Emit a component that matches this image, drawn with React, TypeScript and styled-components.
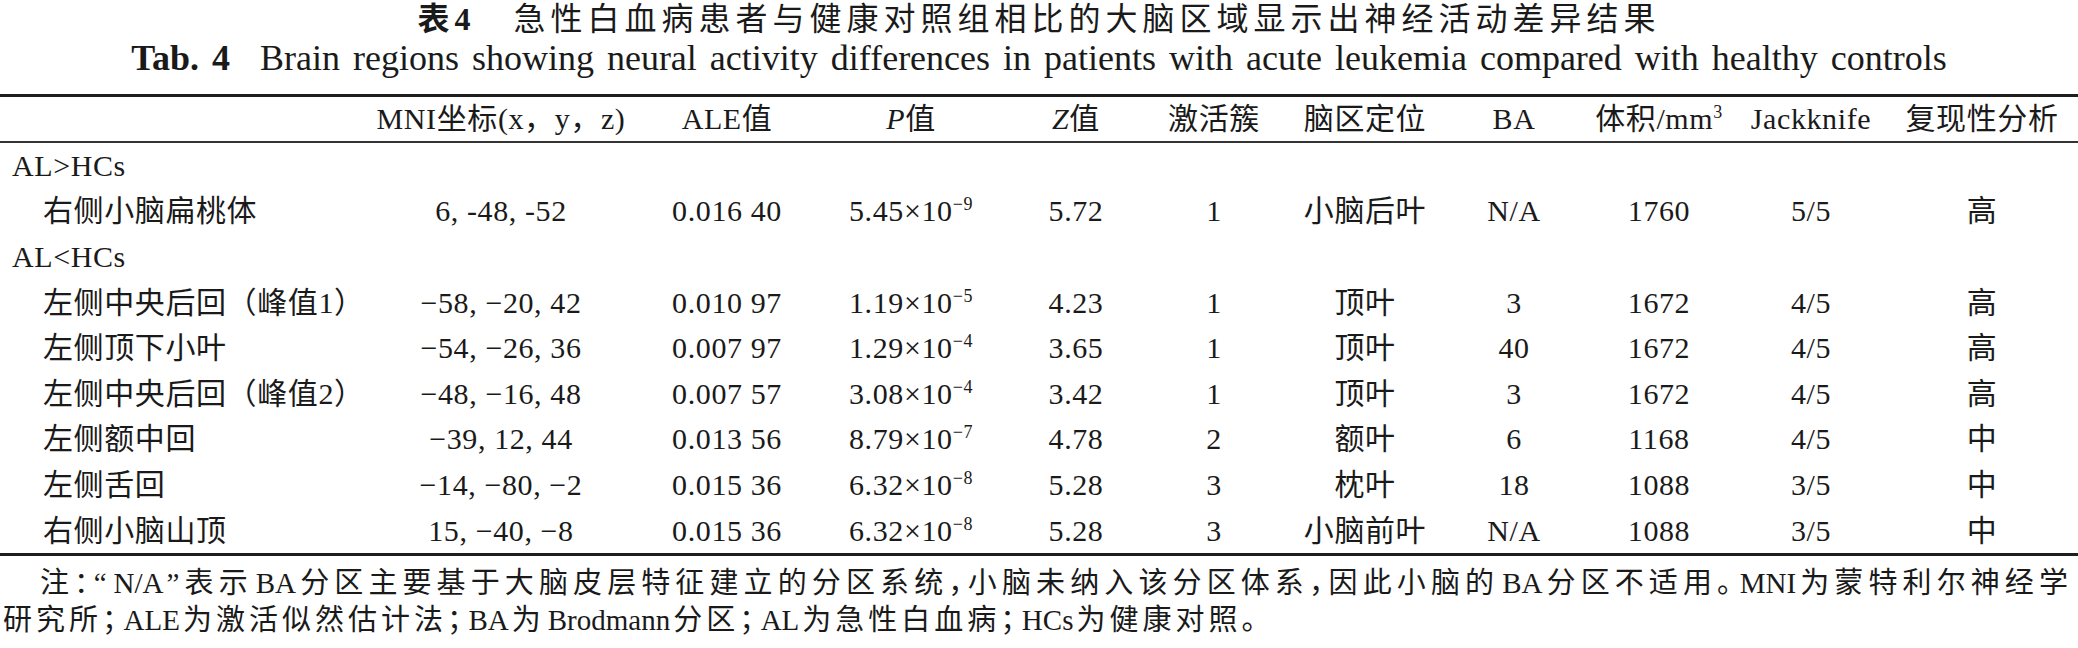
import React from "react";
import styled, { createGlobalStyle } from "styled-components";

const GlobalStyle = createGlobalStyle`
  html, body {
    margin: 0;
    padding: 0;
    background: #ffffff;
    overflow: hidden;
  }
  body {
    font-family: "Liberation Serif", "Noto Sans CJK SC", serif;
    color: #1a1a1a;
  }
`;

const Page = styled.main`
  width: 2078px;
  display: flex;
  flex-direction: column;
`;

const CaptionCn = styled.h1`
  margin: 0;
  height: 38px;
  line-height: 38px;
  text-align: center;
  font-size: 32px;
  font-weight: 400;
  letter-spacing: 5px;
  white-space: nowrap;
`;

const CaptionEn = styled.h2`
  margin: 0;
  height: 40px;
  line-height: 40px;
  text-align: center;
  font-size: 36px;
  font-weight: 400;
  word-spacing: 4px;
  white-space: nowrap;
`;

const CaptionLabel = styled.span<{ $gap: number }>`
  font-weight: 700;
  margin-right: ${(p) => p.$gap}px;
`;

const Table = styled.section`
  margin-top: 16px;
  border-top: 3px solid #1e1e1e;
  border-bottom: 3px solid #1e1e1e;
  font-size: 30px;
  letter-spacing: 0.6px;
`;

const COLUMNS = "372px 258px 194px 174px 156px 120px 182px 116px 174px 130px 202px";

const Row = styled.div<{ $head?: boolean }>`
  display: grid;
  grid-template-columns: ${COLUMNS};
  align-items: center;
  height: ${(p) => (p.$head ? "44px" : "45.6px")};
  border-bottom: ${(p) => (p.$head ? "2px solid #333" : "none")};
  white-space: nowrap;
  line-height: 36px;
`;

const Cell = styled.div`
  text-align: center;

  &:first-child {
    text-align: left;
    padding-left: 43px;
  }

  &:last-child {
    padding-left: 10px;
  }
`;

const GroupLabel = styled.div`
  grid-column: 1 / -1;
  padding-left: 12px;
`;

const Var = styled.i`
  font-style: italic;
`;

const Sup = styled.sup`
  font-size: 0.6em;
  line-height: 0;
  vertical-align: 0.6em;
`;

const Notes = styled.section`
  margin-top: 9px;
  padding: 0 6px 0 3px;
  font-size: 29px;
  line-height: 37px;
  letter-spacing: 4px;
  font-feature-settings: "halt";
`;

const NoteLine = styled.p<{ $fill?: boolean }>`
  margin: 0;
  white-space: nowrap;
  text-indent: ${(p) => (p.$fill ? "37px" : "0")};
  text-align: ${(p) => (p.$fill ? "justify" : "left")};
  text-align-last: ${(p) => (p.$fill ? "justify" : "left")};
`;

const Term = styled.span`
  letter-spacing: 0;
  margin: 0 3px;
`;

const sci = (m: string, e: string) => (
  <>
    {m}×10<Sup>{e}</Sup>
  </>
);

type Entry = {
  region: string;
  mni: string;
  ale: string;
  p: React.ReactNode;
  z: string;
  cluster: string;
  lobe: string;
  ba: string;
  volume: string;
  jack: string;
  repro: string;
};

type Group = { label: string; rows: Entry[] };

const groups: Group[] = [
  {
    label: "AL>HCs",
    rows: [
      { region: "右侧小脑扁桃体", mni: "6, -48, -52", ale: "0.016 40", p: sci("5.45", "−9"), z: "5.72", cluster: "1", lobe: "小脑后叶", ba: "N/A", volume: "1760", jack: "5/5", repro: "高" },
    ],
  },
  {
    label: "AL<HCs",
    rows: [
      { region: "左侧中央后回（峰值1）", mni: "−58, −20, 42", ale: "0.010 97", p: sci("1.19", "−5"), z: "4.23", cluster: "1", lobe: "顶叶", ba: "3", volume: "1672", jack: "4/5", repro: "高" },
      { region: "左侧顶下小叶", mni: "−54, −26, 36", ale: "0.007 97", p: sci("1.29", "−4"), z: "3.65", cluster: "1", lobe: "顶叶", ba: "40", volume: "1672", jack: "4/5", repro: "高" },
      { region: "左侧中央后回（峰值2）", mni: "−48, −16, 48", ale: "0.007 57", p: sci("3.08", "−4"), z: "3.42", cluster: "1", lobe: "顶叶", ba: "3", volume: "1672", jack: "4/5", repro: "高" },
      { region: "左侧额中回", mni: "−39, 12, 44", ale: "0.013 56", p: sci("8.79", "−7"), z: "4.78", cluster: "2", lobe: "额叶", ba: "6", volume: "1168", jack: "4/5", repro: "中" },
      { region: "左侧舌回", mni: "−14, −80, −2", ale: "0.015 36", p: sci("6.32", "−8"), z: "5.28", cluster: "3", lobe: "枕叶", ba: "18", volume: "1088", jack: "3/5", repro: "中" },
      { region: "右侧小脑山顶", mni: "15, −40, −8", ale: "0.015 36", p: sci("6.32", "−8"), z: "5.28", cluster: "3", lobe: "小脑前叶", ba: "N/A", volume: "1088", jack: "3/5", repro: "中" },
    ],
  },
];

const App: React.FC = () => {
  return (
    <Page>
      <GlobalStyle />
      <CaptionCn>
        <CaptionLabel $gap={38}>表4</CaptionLabel>
        急性白血病患者与健康对照组相比的大脑区域显示出神经活动差异结果
      </CaptionCn>
      <CaptionEn>
        <CaptionLabel $gap={30}>Tab. 4</CaptionLabel>
        Brain regions showing neural activity differences in patients with acute leukemia compared with healthy controls
      </CaptionEn>

      <Table>
        <Row $head>
          <Cell />
          <Cell>MNI坐标(x，y，z)</Cell>
          <Cell>ALE值</Cell>
          <Cell>
            <Var>P</Var>值
          </Cell>
          <Cell>
            <Var>Z</Var>值
          </Cell>
          <Cell>激活簇</Cell>
          <Cell>脑区定位</Cell>
          <Cell>BA</Cell>
          <Cell>
            体积/mm<Sup>3</Sup>
          </Cell>
          <Cell>Jackknife</Cell>
          <Cell>复现性分析</Cell>
        </Row>

        {groups.map((group) => (
          <React.Fragment key={group.label}>
            <Row>
              <GroupLabel>{group.label}</GroupLabel>
            </Row>
            {group.rows.map((r) => (
              <Row key={r.region}>
                <Cell>{r.region}</Cell>
                <Cell>{r.mni}</Cell>
                <Cell>{r.ale}</Cell>
                <Cell>{r.p}</Cell>
                <Cell>{r.z}</Cell>
                <Cell>{r.cluster}</Cell>
                <Cell>{r.lobe}</Cell>
                <Cell>{r.ba}</Cell>
                <Cell>{r.volume}</Cell>
                <Cell>{r.jack}</Cell>
                <Cell>{r.repro}</Cell>
              </Row>
            ))}
          </React.Fragment>
        ))}
      </Table>

      <Notes>
        <NoteLine $fill>
          注：“<Term>N/A</Term>”表示<Term>BA</Term>分区主要基于大脑皮层特征建立的分区系统，小脑未纳入该分区体系，因此小脑的<Term>BA</Term>分区不适用。<Term>MNI</Term>为蒙特利尔神经学
        </NoteLine>
        <NoteLine>
          研究所；<Term>ALE</Term>为激活似然估计法；<Term>BA</Term>为<Term>Brodmann</Term>分区；<Term>AL</Term>为急性白血病；<Term>HCs</Term>为健康对照。
        </NoteLine>
      </Notes>
    </Page>
  );
};

export default App;
